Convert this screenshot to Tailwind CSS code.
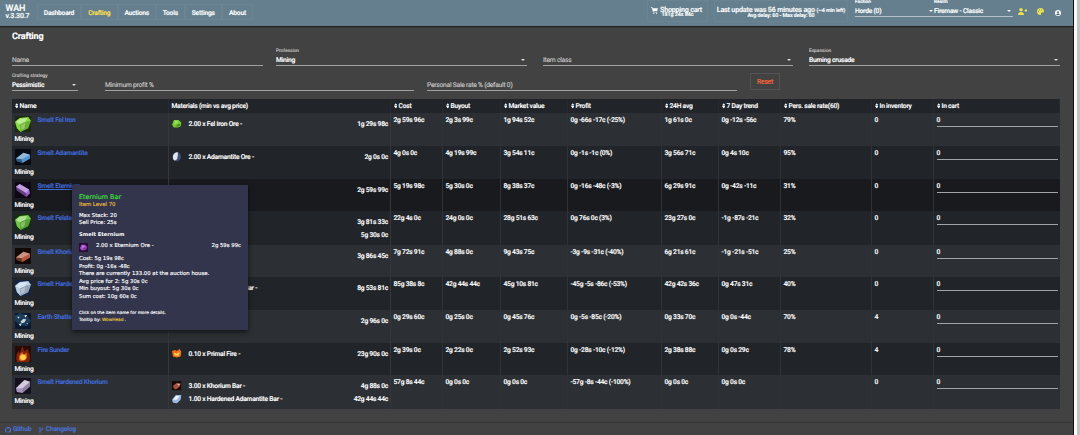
<!DOCTYPE html>
<html lang="en">
<head>
<meta charset="utf-8">
<title>WAH - Crafting</title>
<script src="https://cdn.jsdelivr.net/npm/@tailwindcss/browser@4"></script>
</head>
<body class="relative flex h-[435px] w-[1080px] overflow-hidden bg-[#424242] font-['Roboto',sans-serif] text-[6.7px] leading-[8px] font-medium tracking-[-0.23px] whitespace-nowrap text-white [-webkit-text-stroke:0.15px] [text-rendering:geometricPrecision]">

<svg class="hidden">
  <defs>
    <symbol id="sort" viewBox="0 0 8 12"><path fill="#fff" d="M4 0L8 5.300H0zM4 12L0 6.700h8z"/></symbol>
    <symbol id="gem" viewBox="0 0 17 17"><path fill="currentColor" d="M0 6L5 2l9-1 3 4-3 8-8 4-4-4z"/><path fill="#fff" opacity=".45" d="M1 6l4-3 8-1-2 4-6 3z"/><path fill="#000" opacity=".2" d="M5 9l6-3 6-1-3 8-8 4z"/><path fill="#fff" opacity=".3" d="M6 10l5-3-1 6-3 2z"/></symbol>
    <symbol id="ingot" viewBox="0 0 17 17"><path fill="currentColor" d="M1 5l4-3 10 6 1 4-4 4L2 9z"/><path fill="#fff" opacity=".4" d="M1 5l4-3 10 6-3 4z"/><path fill="#000" opacity=".35" d="M1 5l11 7v4L2 9z"/></symbol>
    <symbol id="khorium" viewBox="0 0 17 17"><path fill="currentColor" d="M1 10l8-6 7 2 0 4-8 5-6-2z"/><path fill="#fff" opacity=".35" d="M1 10l8-6 7 2-9 5z"/><path fill="#000" opacity=".4" d="M1 10l6 1 1 4-6-2z"/></symbol>
    <symbol id="crystal" viewBox="0 0 17 17"><path fill="currentColor" d="M1 11L10 2l6 2 0 5-8 7-6-1z"/><path fill="#fff" opacity=".5" d="M1 11l9-9 6 2-8 7z"/><path fill="#000" opacity=".15" d="M8 11l8-7v5l-8 7z"/></symbol>
    <symbol id="stars" viewBox="0 0 17 17"><path fill="#1c3c5c" d="M0 3l5-3 7 2 5 6-4 6-8-1-5-5z"/><path fill="#cbd8d0" d="M6 9l3-3 3 1-2 3-3 1zM4 12l3-1-1 3zM10 2l3 0-2 3zM2 4l3 0-1 2zM12 11l2 0-1 1z"/></symbol>
    <symbol id="flame" viewBox="0 0 17 17"><path fill="#7d2408" d="M2 17Q0 9 4 5l1 3 3-8 2 6 3-3q5 8 2 14z"/><path fill="#e8691b" d="M4 14q0-5 4-8 0 3 2 3l2-2q3 8-4 9-3 0-4-2z"/><circle cx="8.500" cy="12" r="3" fill="#ffd34a"/></symbol>
    <symbol id="ore" viewBox="0 0 10 10"><path fill="currentColor" d="M2 1l5 0 3 3-1 4-3 1-4 0-2-3z"/><path fill="#fff" opacity=".3" d="M3 2l3 0 0 2-3 2z"/><path fill="#000" opacity=".3" d="M7 5l2 0-1 3-5 0z"/></symbol>
    <symbol id="pebble" viewBox="0 0 10 10"><ellipse cx="5" cy="5" rx="4.500" ry="5" fill="#3d5070"/><path fill="#dfe5ee" d="M6 0Q1 1 1 5t2 4q4-1 3-9z"/></symbol>
    <symbol id="ember" viewBox="0 0 10 10"><path fill="#f2701a" d="M0 2l3-1 2 1 3-2 2 3-1 5-4 1-4-1z"/><path fill="#ffd257" d="M2 4l3 1 3-2-1 4-4 0z"/></symbol>
    <symbol id="barsmall" viewBox="0 0 10 10"><path fill="#170b09" d="M0 0h10v10H0z"/><path fill="#a8533d" d="M1 5l4-3 4 1-1 3-4 3-2-1z"/><path fill="#e6b8a6" d="M5 3l4 0-2 2z"/></symbol>
    <symbol id="shard" viewBox="0 0 10 10"><path fill="#9db9de" d="M0 6l4-5 6 0-1 5-4 4-4-1z"/><path fill="#edf3fb" d="M1 6l3-4 4 0-3 4z"/></symbol>
  </defs>
</svg>

<div class="flex w-[1073px] flex-col">
  <header class="flex h-[26px] shrink-0 items-start bg-[#657f8e] shadow-[0_1px_1px_#222]">
    <div class="w-[37px] pt-[5px] pl-[5.5px] text-[9px] leading-[8px] tracking-[-0.1px]">WAH<div class="text-[7px] leading-[6px] tracking-[-0.1px]">v.3.30.7</div></div>
    <nav class="mt-[4px] flex h-[16px] text-center leading-[16px]">
      <a class="w-[44px] border border-[#6b8493]">Dashboard</a>
      <a class="w-[36.5px] border border-[#6b8493] text-[#ffe14a]">Crafting</a>
      <a class="w-[38.5px] border border-[#6b8493]">Auctions</a>
      <a class="w-[28.5px] border border-[#6b8493]">Tools</a>
      <a class="w-[37.5px] border border-[#6b8493]">Settings</a>
      <a class="w-[31px] border border-[#6b8493]">About</a>
    </nav>
    <div class="ml-[394px] flex h-[22px] w-[61px] flex-col items-center border border-[#6b8493] pt-[6px]">
      <div class="flex h-[6px] items-center gap-[2px] pr-[2px] text-[7.2px]"><svg class="size-[7px]" viewBox="0 0 24 22" fill="#fff"><path d="M0 0h5l1 3h18l-3 10H8l1 2h12v2H7L3 2H0z"/><circle cx="9" cy="20" r="2.300"/><circle cx="19" cy="20" r="2.300"/></svg>Shopping cart</div>
      <div class="text-[5.4px] leading-[5px] tracking-[-0.05px]">181g 24s 84c</div>
    </div>
    <div class="ml-[6px] h-[22px] w-[134px] border border-[#6b8493] pt-[6px] text-center">
      <div class="text-[7.2px] leading-[6px] tracking-[-0.2px]">Last update was 56 minutes ago <span class="text-[5.4px] tracking-[-0.1px]">(~4 min left)</span></div>
      <div class="text-[5.4px] leading-[5px] tracking-[-0.1px]">Avg delay: 60 - Max delay: 60</div>
    </div>
    <div class="ml-[7px] h-[17px] w-[79px] border-b border-[#b5c1c8]">
      <div class="h-[5px] text-[4.800px] leading-[5px] tracking-normal">Faction</div>
      <div class="flex items-center justify-between leading-[12px]">Horde (0)<i class="mr-px border-x-2 border-t-2 border-x-transparent border-t-white"></i></div>
    </div>
    <div class="h-[17px] w-[79px] border-b border-[#b5c1c8]">
      <div class="h-[5px] text-[4.800px] leading-[5px] tracking-normal">Realm</div>
      <div class="flex items-center justify-between leading-[12px]">Firemaw - Classic<i class="mr-[2px] border-x-2 border-t-2 border-x-transparent border-t-white"></i></div>
    </div>
    <svg class="mt-[8px] ml-[5px] h-[7px] w-[9px]" viewBox="0 0 18 14" fill="#ebe04d"><circle cx="6" cy="3.500" r="3.500"/><path d="M0 14q0-6 6-6t6 6zM13 4h2V2h2v2h1v2h-1v2h-2V6h-2z"/></svg>
    <svg class="mt-[8px] ml-[10px] size-[7px]" viewBox="0 0 14 14"><path fill="#ebe04d" d="M7 0a7 7 0 1 0 0 14q2-1 1-3t2-2h2q2 0 2-2a7 7 0 0 0-7-7z"/><g fill="#657f8e"><circle cx="3" cy="7" r="1"/><circle cx="5" cy="3.500" r="1"/><circle cx="9" cy="3.500" r="1"/></g></svg>
    <svg class="mt-[10px] ml-[11px] size-[6px]" viewBox="0 0 14 14"><circle cx="7" cy="7" r="7" fill="#fff"/><circle cx="7" cy="5" r="2.200" fill="#4a616e"/><path fill="#4a616e" d="M3 11q0-3 4-3t4 3q-4 2-8 0z"/></svg>
  </header>

  <main class="flex h-[396px] shrink-0 flex-col pl-[12px]">
    <h1 class="mt-[5px] h-[18px] text-[9px] leading-[13px] font-bold tracking-[-0.15px]">Crafting</h1>

    <section class="flex h-[17px]">
      <div class="mr-[13px] w-[251px] border-b border-[#a0a0a0] pt-[6.500px] font-normal text-[#c6c6c6]">Name</div>
      <div class="mr-[16px] w-[251px] border-b border-[#a0a0a0]"><div class="h-[6.500px] text-[4.800px] leading-[6px] font-normal tracking-normal text-[#c6c6c6]">Profession</div><div class="flex items-center justify-between">Mining<i class="mr-[2px] border-x-2 border-t-2 border-x-transparent border-t-[#ddd]"></i></div></div>
      <div class="mr-[16px] w-[250px] border-b border-[#a0a0a0] pt-[6.500px] font-normal text-[#c6c6c6]"><div class="flex items-center justify-between">Item class<i class="mr-[2px] border-x-2 border-t-2 border-x-transparent border-t-[#ddd]"></i></div></div>
      <div class="w-[251px] border-b border-[#a0a0a0]"><div class="h-[6.500px] text-[4.800px] leading-[6px] font-normal tracking-normal text-[#c6c6c6]">Expansion</div><div class="flex items-center justify-between">Burning crusade<i class="mr-[2px] border-x-2 border-t-2 border-x-transparent border-t-[#ddd]"></i></div></div>
    </section>

    <section class="mt-[8px] flex h-[17px]">
      <div class="mr-[27px] w-[66px] border-b border-[#a0a0a0]"><div class="h-[6.500px] text-[4.800px] leading-[6px] font-normal tracking-normal text-[#c6c6c6]">Crafting strategy</div><div class="flex items-center justify-between">Pessimistic<i class="mr-[2px] border-x-2 border-t-2 border-x-transparent border-t-[#ddd]"></i></div></div>
      <div class="mr-[13px] w-[309px] border-b border-[#a0a0a0] pt-[6.500px] font-normal text-[#c6c6c6]">Minimum profit %</div>
      <div class="mr-[13px] w-[310px] border-b border-[#a0a0a0] pt-[6.500px] font-normal text-[#c6c6c6]">Personal Sale rate % (default 0)</div>
      <button class="mt-[-1px] h-[17px] w-[30px] border border-[#535353] leading-[17px] text-[#f0623c]">Reset</button>
    </section>

    <div id="table" class="mt-[8px] w-[1048px]"></div>
  </main>

  <footer class="flex gap-[8px] border-t border-[#353535] pt-[2px] pl-[5px] leading-[9px] text-[#4a72d8]">
    <span class="flex items-center gap-[2px]"><svg class="size-[6px]" viewBox="0 0 16 16" fill="#4a72d8"><path d="M8 0a8 8 0 0 0-2.500 15.600c.4 0 .5-.2.500-.4v-1.500c-2 .5-2.700-.9-2.700-.9-.4-.9-.9-1.200-.9-1.200-.7-.5 0-.5 0-.5.8 0 1.200.9 1.200.9.8 1.200 2 .9 2.400.7.1-.5.300-.9.500-1.100-1.800-.2-3.600-.9-3.600-4 0-.9.300-1.600.8-2.100 0-.2-.3-1 .1-2.100 0 0 .7-.2 2.200.8a8 8 0 0 1 4 0c1.500-1 2.200-.8 2.200-.8.4 1.100.2 1.900.1 2.100.5.5.8 1.200.8 2.100 0 3.100-1.900 3.800-3.700 4 .3.300.6.8.6 1.500v2.200c0 .2.100.5.500.4A8 8 0 0 0 8 0z"/></svg>Github</span>
    <span class="flex items-center gap-[2px]"><svg class="h-[6px] w-[4.500px]" viewBox="0 0 12 16" fill="none" stroke="#4a72d8" stroke-width="2"><circle cx="2.500" cy="3" r="1.500"/><circle cx="2.500" cy="13" r="1.500"/><circle cx="9.500" cy="4" r="1.500"/><path d="M2.500 4v8M9.500 5q0 4-7 4"/></svg>Changelog</span>
  </footer>
</div>
<div class="w-px bg-[#111]"></div>
<div class="w-[2.500px] bg-[#fafafa]"></div>
<div class="flex-1 bg-[#c3c3c3]"></div>

<aside class="absolute top-[185px] left-[72px] h-[145px] w-[176px] bg-[#32354c] pt-[8px] pr-[7px] pl-[7px] font-['DejaVu_Sans',sans-serif] text-[5.35px] leading-[7.600px] font-normal tracking-normal shadow-[0_2px_5px_#0009]">
  <div class="text-[6.4px] leading-[8px] text-[#3fe03a]">Eternium Bar</div>
  <div class="leading-[8px] text-[#e6b93f]">Item Level 70</div>
  <div class="mt-[3.800px]">Max Stack: 20</div>
  <div>Sell Price: 25s</div>
  <div class="mt-[4px] text-[5.2px] font-bold [-webkit-text-stroke:0]">Smelt Eternium</div>
  <div class="mt-[3px] flex h-[9px] items-center"><svg class="size-[9px] bg-[#2c0b3a] p-px text-[#a44fce]"><use href="#ore"/></svg><span class="ml-[8px] flex-1">2.00 x Eternium Ore -</span><span>2g 59s 99c</span></div>
  <div class="mt-[4.500px]">Cost: 5g 19s 98c</div>
  <div>Profit: 0g -16s -48c</div>
  <div>There are currently 133.00 at the auction house.</div>
  <div>Avg price for 2: 5g 30s 0c</div>
  <div>Min buyout: 5g 30s 0c</div>
  <div>Sum cost: 10g 60s 0c</div>
  <div class="mt-[8px] text-[4.300px]">Click on the item name for more details.</div>
  <div class="text-[4.300px]">Tooltip by: <span class="text-[#e8c93f]">WowHead</span> .</div>
</aside>

<script>
const heads = ['Name', 'Materials (min vs avg price)', 'Cost', 'Buyout', 'Market value', 'Profit', '24H avg', '7 Day trend', 'Pers. sale rate(60)', 'In inventory', 'In cart'];
// height, name, icon, icon colour, icon background, materials, values
const rows = [
  [33, 'Smelt Fel Iron', 'gem', '#86dd3c', '#1b2a12', [['ore', '#74cf2f', '2.00 x Fel Iron Ore -', '1g 29s 98c']], ['2g 59s 96c', '2g 3s 99c', '1g 94s 52c', '0g -66s -17c (-25%)', '1g 61s 0c', '0g -12s -56c', '79%', '0']],
  [33, 'Smelt Adamantite', 'khorium', '#5594cf', '#060b14', [['pebble', '#fff', '2.00 x Adamantite Ore -', '2g 0s 0c']], ['4g 0s 0c', '4g 19s 99c', '3g 54s 11c', '0g -1s -1c (0%)', '3g 56s 71c', '0g 4s 10c', '95%', '0']],
  [32, 'Smelt Eternium', 'ingot', '#9a62c8', '#0d0614', [['ore', '#8f3fb5', '2.00 x Eternium Ore -', '2g 59s 99c']], ['5g 19s 98c', '5g 30s 0c', '8g 38s 37c', '0g -16s -48c (-3%)', '6g 29s 91c', '0g -42s -11c', '31%', '0']],
  [34, 'Smelt Felsteel', 'gem', '#6fc840', '#12300f', [['ore', '#67bd27', '3.00 x Fel Iron Bar -', '3g 81s 33c'], ['ore', '#9a62c8', '2.00 x Eternium Bar -', '5g 30s 0c']], ['22g 4s 0c', '24g 0s 0c', '28g 51s 63c', '0g 76s 0c (3%)', '23g 27s 0c', '-1g -87s -21c', '32%', '0']],
  [32, 'Smelt Khorium', 'khorium', '#b4573f', '#120907', [['ore', '#a5503a', '2.00 x Khorium Ore -', '3g 86s 45c']], ['7g 72s 91c', '4g 88s 0c', '9g 43s 75c', '-3g -9s -31c (-40%)', '6g 21s 61c', '-1g -21s -51c', '25%', '0']],
  [33, 'Smelt Hardened Adamantite', 'gem', '#b9cfe8', '#15243c', [['shard', '#fff', '10.00 x Adamantite Bar -', '8g 53s 81c']], ['85g 38s 8c', '42g 44s 44c', '45g 10s 81c', '-45g -5s -86c (-53%)', '42g 42s 36c', '0g 47s 31c', '40%', '0']],
  [33, 'Earth Shatter', 'stars', '#fff', '#0b1a30', [['ore', '#8a6e3a', '0.10 x Primal Earth -', '2g 96s 0c']], ['0g 29s 60c', '0g 25s 0c', '0g 45s 76c', '0g -5s -85c (-20%)', '0g 33s 70c', '0g 0s -44c', '70%', '4']],
  [32, 'Fire Sunder', 'flame', '#fff', '#2a0a04', [['ember', '#fff', '0.10 x Primal Fire -', '23g 90s 0c']], ['2g 39s 0c', '2g 22s 0c', '2g 52s 93c', '0g -28s -10c (-12%)', '2g 38s 88c', '0g 0s 29c', '78%', '4']],
  [34, 'Smelt Hardened Khorium', 'crystal', '#a795bd', '#150f1e', [['barsmall', '#fff', '3.00 x Khorium Bar -', '4g 88s 0c'], ['shard', '#fff', '1.00 x Hardened Adamantite Bar -', '42g 44s 44c']], ['57g 8s 44c', '0g 0s 0c', '0g 0s 0c', '-57g -8s -44c (-100%)', '0g 0s 0c', '0g 0s 0c', '', '0']]
];
const line = 'grid grid-cols-[157px_222px_52px_58px_67px_94px_57px_62px_91px_62px_126px]';
const sort = '<svg class="h-[5.5px] w-[3.5px] mr-[1.5px]"><use href="#sort"/></svg>';
let html = `<div class="${line} h-[14px] bg-[#212529]">` + heads.map((h, i) => `<div class="flex items-center pl-[2.5px] border-r border-[#262a2e]">${i === 1 ? '' : sort}${h}</div>`).join('') + '</div>';
rows.forEach(([h, name, icon, color, bg, mats, vals], i) => {
  const tone = i === 2 ? 'bg-[#191a1e]' : i % 2 ? 'bg-[#212428]' : 'bg-[#2c3034]';
  html += `<div class="${line} ${tone}" style="height:${h}px">
    <div class="pl-[2.5px] pt-[2px] border-r border-[#34383b]">
      <div class="flex h-[20px] items-start"><svg class="mt-px size-[16px]" viewBox="0 0 17 17" style="background:${bg};color:${color}"><use href="#${icon}"/></svg><a class="ml-[7px] mt-[1px] text-[#416bdb] ${i === 2 ? 'underline' : ''}">${name}</a></div>
      <div>Mining</div></div>
    <div class="pl-[3px] pr-[2px] pt-[5px] border-r border-[#34383b]">${mats.map(([m, c, t, p]) => `<div class="flex h-[13px] items-start pt-[2px]"><svg class="size-[9.5px] -mt-px" style="color:${c}"><use href="#${m}"/></svg><span class="ml-[7px] flex-1">${t}</span><span>${p}</span></div>`).join('')}</div>
    ${vals.map(v => `<div class="pl-[2.5px] pt-[3px] border-r border-[#2f3336]">${v}</div>`).join('')}
    <div class="pl-[2.5px] pt-[3px] pr-[2px]"><div class="border-b border-[#a2a4a6] h-[11px]">0</div></div></div>`;
});
document.getElementById('table').innerHTML = html;
</script>
</body>
</html>
